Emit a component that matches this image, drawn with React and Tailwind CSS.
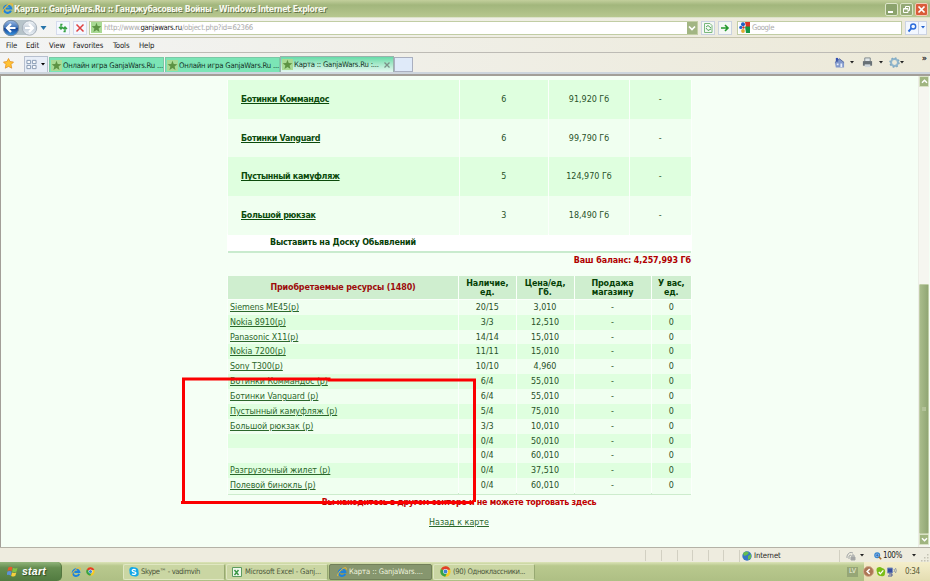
import React from 'react';

const STOCK = [
  { name: 'Ботинки Коммандос', count: '6', price: '91,920 Гб' },
  { name: 'Ботинки Vanguard', count: '6', price: '99,790 Гб' },
  { name: 'Пустынный камуфляж', count: '5', price: '124,970 Гб' },
  { name: 'Большой рюкзак', count: '3', price: '18,490 Гб' },
];

const RESOURCES = [
  { name: 'Siemens ME45(p)', count: '20/15', price: '3,010' },
  { name: 'Nokia 8910(p)', count: '3/3', price: '12,510' },
  { name: 'Panasonic X11(p)', count: '14/14', price: '15,010' },
  { name: 'Nokia 7200(p)', count: '11/11', price: '15,010' },
  { name: 'Sony T300(p)', count: '10/10', price: '4,960' },
  { name: 'Ботинки Коммандос (p)', count: '6/4', price: '55,010' },
  { name: 'Ботинки Vanguard (p)', count: '6/4', price: '55,010' },
  { name: 'Пустынный камуфляж (p)', count: '5/4', price: '75,010' },
  { name: 'Большой рюкзак (p)', count: '3/3', price: '10,010' },
  { name: '', count: '0/4', price: '50,010' },
  { name: '', count: '0/4', price: '60,010' },
  { name: 'Разгрузочный жилет (p)', count: '0/4', price: '37,510' },
  { name: 'Полевой бинокль (p)', count: '0/4', price: '60,010' },
];

function IeIcon({ className }) {
  return (
    <svg viewBox="0 0 12 12" className={className} fill="none">
      <path d="M9.8 8.2A4 4 0 1 1 10 6H4" stroke="#1e82dc" strokeWidth="2.3" />
      <path d="M1 10.8C-.5 8.5 7-.5 11 1.1c.7.4.5 1.2 0 2.2" stroke="#f0bd35" strokeWidth="1.2" />
    </svg>
  );
}

function ChromeIcon({ className }) {
  return (
    <svg viewBox="0 0 12 12" className={className}>
      <circle cx="6" cy="6" r="5.6" fill="#f5c926" />
      <path d="M6 6L1 3.3A5.6 5.6 0 0 1 11.2 4H6z" fill="#df3f2d" />
      <path d="M6 6L1 3.3A5.6 5.6 0 0 0 5.6 11.6L8 7z" fill="#35a349" />
      <circle cx="6" cy="6" r="2.7" fill="#fff" />
      <circle cx="6" cy="6" r="2.1" fill="#3f83d8" />
    </svg>
  );
}

function StarIcon() {
  return (
    <svg viewBox="0 0 11 11" className="h-[11px] w-[11px] shrink-0">
      <path d="M0 0h11v11H0z" fill="#a9da94" />
      <path d="M5.5.8l1.2 3.1 3.6.3-2.7 2.2.9 3.6-3-1.9L2.4 10l1-3.6L.7 4.2l3.5-.3z" fill="#5d9344" />
    </svg>
  );
}

function SkypeIcon({ className }) {
  return (
    <svg viewBox="0 0 11 11" className={className}>
      <path d="M1 1q2-1.5 4-.6 6 .2 5.4 5.2 1 3-1.2 4.4-2 1-3.6.2Q.2 10 .6 5 0 2.5 1 1" fill="#12a8e8" />
      <path d="M7.5 3.5Q5.5 2 3.800 3.200c-1 1.600 1 1.900 2 2.200 2 .4 2.200 1.500 1.300 2.200Q5.200 8.800 3.400 7.300" fill="none" stroke="#fff" strokeWidth="1.4" />
    </svg>
  );
}

function Caret({ className }) {
  return (
    <svg viewBox="0 0 4 3" className={className}>
      <path d="M0 0h4L2 2.6z" fill="currentColor" />
    </svg>
  );
}

function TitleBar() {
  return (
    <div className="flex h-[17px] shrink-0 items-center bg-linear-to-b from-[#c3cf9c] via-[#a2b67c] via-30% to-[#b7c78f] pl-[2px] pr-[2px]">
      <IeIcon className="h-[11px] w-[11px]" />
      <span className="ml-px whitespace-pre font-['DejaVu_Sans_Condensed',sans-serif] text-[8.6px] font-bold leading-[16px] tracking-[-0.39px] text-[#f8faee] [text-shadow:1px_1px_0_#66764a]">
        Карта :: GanjaWars.Ru :: Ганджубасовые Войны - Windows Internet Explorer
      </span>
      <div className="ml-auto flex gap-[2px] pt-px">
        <div className="flex h-[13px] w-[13px] items-end rounded-[2px] border border-[#dce4c8] bg-[#8ca36d] pb-[2px] pl-[2px]">
          <span className="h-[2px] w-[5px] bg-white" />
        </div>
        <div className="h-[13px] w-[13px] rounded-[2px] border border-[#dce4c8] bg-[#94a976]">
          <svg viewBox="0 0 11 11" fill="none" stroke="#fff">
            <path d="M4.500 4V2.500h4v4H7M2.500 4.500h4.500v4H2.500zM2.500 5h4.500" />
          </svg>
        </div>
        <div className="h-[13px] w-[13px] rounded-[2px] border border-[#f4cbb9] bg-[#d95c39]">
          <svg viewBox="0 0 11 11" fill="none" stroke="#fff" strokeWidth="1.7">
            <path d="M2.500 2.500l6 6m0-6l-6 6" />
          </svg>
        </div>
      </div>
    </div>
  );
}

function AddressBar() {
  return (
    <div className="flex h-[21px] shrink-0 items-center border-b border-[#c5c4ad] border-t border-t-[#dce2c9] bg-linear-to-r from-[#f3f4f4] to-[#ece9d8] pl-[3px] pr-[3px]">
      <svg viewBox="0 0 46 18" className="h-[18px] w-[46px]">
        <defs>
          <linearGradient id="back" x2="0" y2="1">
            <stop stopColor="#9dbce6" />
            <stop offset=".48" stopColor="#3c70b7" />
            <stop offset=".5" stopColor="#143d91" />
            <stop offset="1" stopColor="#3b9be5" />
          </linearGradient>
          <linearGradient id="fwd" x2="0" y2="1">
            <stop stopColor="#f4f7fa" />
            <stop offset=".5" stopColor="#c3ced9" />
            <stop offset="1" stopColor="#eef3f8" />
          </linearGradient>
        </defs>
        <path d="M7 1h20a8 8 0 0 1 0 15H8z" fill="#b7c4ca" />
        <circle cx="8" cy="9" r="7.7" fill="url(#back)" stroke="#76899d" />
        <circle cx="26.5" cy="9" r="7.2" fill="url(#fwd)" stroke="#a7b1bb" />
        <path d="M12.500 9H4m4-4L4 9l4 4" stroke="#fff" strokeWidth="2.2" fill="none" />
        <path d="M22 9h8m-4-4l4 4-4 4" stroke="#fff" strokeWidth="2.200" fill="none" />
        <path d="M37.500 7h6l-3 4z" fill="#2674aa" />
      </svg>
      <div className="ml-[7px] flex gap-[3px]">
        <div className="h-[14px] w-[14px] border border-[#d6dced] bg-[#f4f8ff]">
          <svg viewBox="0 0 12 12" fill="none" stroke="#34a142" strokeWidth="1.4">
            <path d="M5.500 2.500H4v4M2 5l2 2 2-2M6.500 9.500H8v-4M6 7l2-2 2 2" />
          </svg>
        </div>
        <div className="h-[14px] w-[14px] border border-[#d6dced] bg-[#f4f8ff]">
          <svg viewBox="0 0 12 12" fill="none" stroke="#df4141" strokeWidth="1.5">
            <path d="M2.500 2.500l7 7m0-7l-7 7" />
          </svg>
        </div>
      </div>
      <div className="ml-[2px] flex h-[14px] w-[609px] items-center border border-[#c1cda4] bg-white pl-px">
        <StarIcon />
        <span className="ml-[2px] whitespace-pre text-[7.7px] leading-[12px] tracking-[-0.29px] text-[#aaa]">
          http://www.<span className="text-[#222]">ganjawars.ru</span>/object.php?id=62366
        </span>
        <div className="ml-auto flex h-[12px] w-[10px] items-center justify-center bg-[#a2b583]">
          <svg viewBox="0 0 8 6" className="h-[6px] w-[8px]" fill="none" stroke="#fff" strokeWidth="1.7">
            <path d="M1 1.500l3 3 3-3" />
          </svg>
        </div>
      </div>
      <div className="ml-[3px] flex gap-[3px]">
        <div className="h-[14px] w-[14px] border border-[#cbd2df] bg-[#f4f8f4]">
          <svg viewBox="0 0 12 12" fill="none" stroke="#79b77c">
            <path d="M2.500 1.500H8l2 2v7H2.500z" />
            <path d="M4 5l2-1.500L9 6M4 6l2 2.500L9 7" stroke="#50a957" />
          </svg>
        </div>
        <div className="h-[14px] w-[14px] border border-[#cbd2df] bg-[#f4f8f4]">
          <svg viewBox="0 0 12 12" fill="none" stroke="#24992d" strokeWidth="1.6">
            <path d="M2 6h7M6 3l3 3-3 3" />
          </svg>
        </div>
      </div>
      <div className="ml-[5px] flex h-[14px] w-[165px] items-center border border-[#c1cda4] bg-white pl-px">
        <svg viewBox="0 0 11 11" className="h-[11px] w-[11px]">
          <path d="M0 0h7v11H0z" fill="#f6f8ff" />
          <path d="M6 0h5v5H7z" fill="#d93426" />
          <path d="M6 4.500h5V11H7z" fill="#149644" />
          <circle cx="4" cy="2.300" r="2" fill="#205fc5" />
          <circle cx="1.800" cy="5.400" r="1.600" fill="#2366ca" />
          <circle cx="4.500" cy="5.500" r="1.200" fill="#cf3b30" />
          <circle cx="4" cy="9" r="1.900" fill="#e2ad30" />
        </svg>
        <span className="ml-[2px] text-[7.7px] tracking-[-0.4px] text-[#aaa]">Google</span>
      </div>
      <div className="ml-[3px] flex h-[14px] w-[22px] items-center border border-[#ccd3e2] bg-[#f2f7ff]">
        <svg viewBox="0 0 12 12" className="h-[12px] w-[13px] border-r border-[#ccd3e2]" fill="none" stroke="#2b6bdb">
          <circle cx="7.200" cy="4.500" r="2.500" strokeWidth="1.400" />
          <path d="M5.300 6.400L2.500 9.500" strokeWidth="1.900" />
        </svg>
        <Caret className="ml-[2px] h-[3px] w-[4px] text-[#2563cd]" />
      </div>
    </div>
  );
}

function MenuBar() {
  return (
    <div className="flex h-[15px] shrink-0 items-center border-b border-[#bdbbb5] bg-linear-to-r from-[#f3f4f4] to-[#ece9d8] pl-[6px] pt-[2px] text-[7.7px] tracking-[-0.1px]">
      <span className="w-[20px]">File</span>
      <span className="w-[23px]">Edit</span>
      <span className="w-[24px]">View</span>
      <span className="w-[40px]">Favorites</span>
      <span className="w-[26px]">Tools</span>
      <span>Help</span>
    </div>
  );
}

function TabBar() {
  return (
    <div className="flex h-[21px] shrink-0 items-end border-b-2 border-[#cdd5dd] bg-linear-to-r from-[#f3f4f4] to-[#ece9d8] pr-[3px]">
      <svg viewBox="0 0 12 12" className="mb-[3px] ml-[3px] h-[11px] w-[11px]">
        <path d="M6 .5l1.700 3.400 3.800.5-2.700 2.700.7 4L6 9.200l-3.500 1.900.7-4L.5 4.400l3.800-.5z" fill="#ffc334" stroke="#e28c1d" strokeWidth=".8" />
      </svg>
      <div className="ml-[10px] flex h-[16px] w-[24px] items-center border border-b-0 border-[#b7c0cf] bg-[#e8eef8]">
        <svg viewBox="0 0 12 12" className="ml-px h-[11px] w-[11px]" fill="#f7f9fb" stroke="#8296b0">
          <path d="M1 1.500h4v3.500H1zM7 1.500h4v3.500H7zM1 7h4v3.500H1zM7 7h4v3.500H7z" />
        </svg>
        <Caret className="ml-[4px] h-[3px] w-[4px] text-black" />
      </div>
      <div className="flex items-end text-[7.7px] leading-[14px] tracking-[-0.21px] text-[#143326]">
        <div className="ml-px flex h-[15px] w-[115px] items-center gap-px whitespace-pre border border-b-0 border-[#7ac9a5] bg-[#7be5b6] pl-px pt-px">
          <StarIcon />
          Онлайн игра GanjaWars.Ru ...
        </div>
        <div className="ml-px flex h-[15px] w-[115px] items-center gap-px whitespace-pre border border-b-0 border-[#7ac9a5] bg-[#7be5b6] pl-px pt-px">
          <StarIcon />
          Онлайн игра GanjaWars.Ru ...
        </div>
        <div className="flex h-[16px] w-[114px] items-center gap-px whitespace-pre border border-b-0 border-[#9ab2ac] bg-linear-to-b from-[#65dba8] to-[#e4f8f1] pl-px">
          <StarIcon />
          Карта :: GanjaWars.Ru :...
          <svg viewBox="0 0 6 6" className="ml-auto mr-[3px] h-[6px] w-[6px]" fill="none" stroke="#7b9188" strokeWidth="1.300">
            <path d="M.5.500l5 5m0-5l-5 5" />
          </svg>
        </div>
        <div className="h-[15px] w-[19px] border border-[#a9afbf] bg-[#dfeaf9]" />
      </div>
      <div className="mb-[3px] ml-auto flex items-center">
        <svg viewBox="0 0 12 12" className="h-[11px] w-[11px]">
          <path d="M1 6l5-4 5 4v5.500H2z" fill="#8198cb" />
          <path d="M2 1h2.500v4H2z" fill="#3450b3" />
          <path d="M1 6l5-4 5 4" fill="none" stroke="#53679c" />
          <path d="M3 7h2v2H3zM7 7h2v4H7z" fill="#e9f0fc" />
        </svg>
        <Caret className="ml-[5px] h-[3px] w-[4px]" />
        <svg viewBox="0 0 12 12" className="ml-[8px] h-[11px] w-[11px]">
          <path d="M3 1h6v4H3z" fill="#dfe5e8" stroke="#7d8588" />
          <path d="M1 4.500h10v5H1z" fill="#687176" />
          <path d="M3 8h6v3H3z" fill="#d1d8dc" />
        </svg>
        <Caret className="ml-[6px] h-[3px] w-[4px]" />
        <svg viewBox="0 0 12 12" className="ml-[6px] h-[11px] w-[11px]" fill="none">
          <circle cx="6" cy="6" r="3.800" stroke="#8fb5cc" strokeWidth="2.200" />
          <circle cx="6" cy="6" r="5" stroke="#7fa8c0" strokeWidth="1.500" strokeDasharray="1.800 2.100" />
        </svg>
        <Caret className="h-[3px] w-[4px]" />
        <span className="mb-[9px] ml-[18px] text-[9px] font-bold leading-[4px]">»</span>
      </div>
    </div>
  );
}

function ShopPage() {
  return (
    <div className="min-w-0 flex-1 overflow-hidden bg-[#f5fff5] pl-[226px] pt-[4px] font-['DejaVu_Sans',sans-serif] text-[8px] leading-[10px] text-[#285128]">
      <div className="w-[465px] bg-[#fbfffb] px-px">
        {STOCK.map((item, i) => (
          <div
            key={item.name}
            className={`mb-px grid h-[37.7px] grid-cols-[230.5px_88.5px_80px_60.5px] gap-px text-center leading-[39px] ${i % 2 ? '*:bg-[#f0fff0]' : '*:bg-[#dfffdf]'}`}
          >
            <div className="pl-[13px] text-left">
              <a className="font-bold tracking-[-0.34px] text-[#0b4b0b] underline">{item.name}</a>
            </div>
            <div>{item.count}</div>
            <div>{item.price}</div>
            <div>-</div>
          </div>
        ))}
        <div className="-mx-px -mt-px h-[17.5px] bg-white pl-[43px] font-bold leading-[18px] tracking-[-0.19px] text-[#064006]">
          Выставить на Доску Обьявлений
        </div>
        <div className="h-[2px] bg-[#c9ebce]" />
      </div>
      <div className="h-[22.7px] w-[464px] pt-[3px] text-right font-bold leading-[10px] tracking-[-0.11px] text-[#b00000]">
        Ваш баланс: 4,257,993 Гб
      </div>
      <div className="w-[465px] bg-[#fbfffb] px-px">
        <div className="mb-px grid h-[23px] grid-cols-[230px_56.5px_57px_76px_39.5px] gap-px text-center font-bold leading-[9px] tracking-[-0.13px] text-[#064006] *:flex *:items-center *:justify-center *:bg-[#cfeecf] *:pt-px">
          <div className="text-[#9d0b0b]">Приобретаемые ресурсы (1480)</div>
          <div>Наличие,<br />ед.</div>
          <div>Цена/ед,<br />Гб.</div>
          <div>Продажа<br />магазину</div>
          <div>У вас,<br />ед.</div>
        </div>
        {RESOURCES.map((item, i) => (
          <div
            key={i}
            className={`mb-px grid h-[13.85px] grid-cols-[230px_56.5px_57px_76px_39.5px] gap-px text-center leading-[15.5px] ${i % 2 ? '*:bg-[#dfffdf]' : '*:bg-[#f0fff0]'}`}
          >
            <div className="pl-[2px] text-left">
              <a className="tracking-[-0.08px] text-[#2b672b] underline">{item.name}</a>
            </div>
            <div>{item.count}</div>
            <div>{item.price}</div>
            <div>-</div>
            <div>0</div>
          </div>
        ))}
        <div className="mt-px h-[2px] bg-[#cdeccd]" />
      </div>
      <div className="w-[464px] pt-[3px] text-center font-bold tracking-[-0.29px] text-[#c00000]">
        Вы находитесь в другом секторе и не можете торговать здесь
      </div>
      <div className="w-[464px] pt-[10px] text-center">
        <a className="text-[#2b672b] underline">Назад к карте</a>
      </div>
    </div>
  );
}

function ScrollBar() {
  return (
    <div className="flex w-[11px] shrink-0 flex-col border-l border-[#eceee6] bg-[#f6f6f0]">
      <div className="flex h-[11px] items-center justify-center rounded-[1px] border border-[#d9e2c5] bg-[#a0b580]">
        <svg viewBox="0 0 8 6" className="h-[5px] w-[7px]" fill="none" stroke="#fff" strokeWidth="1.8">
          <path d="M1 4.500l3-3 3 3" />
        </svg>
      </div>
      <div className="mt-auto flex h-[250px] items-center justify-center rounded-[1px] border border-[#c0cda7] bg-linear-to-r from-[#a9bc8b] to-[#91a674]">
        <div className="h-[4px] w-[4px] bg-[#b3c299]" />
      </div>
      <div className="mb-[2px] flex h-[11px] items-center justify-center rounded-[1px] border border-[#d9e2c5] bg-[#a0b580]">
        <svg viewBox="0 0 8 6" className="h-[5px] w-[7px]" fill="none" stroke="#fff" strokeWidth="1.8">
          <path d="M1 1.500l3 3 3-3" />
        </svg>
      </div>
    </div>
  );
}

function StatusBar() {
  return (
    <div className="flex h-[15px] shrink-0 items-center justify-end border-t border-[#b4b2a6] bg-[#eeecdf] pt-px text-[7.7px]">
      <div className="flex h-[11px]">
        {[0, 1, 2, 3, 4, 5].map((n) => (
          <div key={n} className="w-[15.6px] border-l border-[#d2d0c2]" />
        ))}
      </div>
      <div className="flex h-[12px] w-[100px] items-center border-l border-[#d2d0c2] pl-[2px]">
        <svg viewBox="0 0 10 10" className="h-[10px] w-[10px]">
          <circle cx="5" cy="5" r="4.700" fill="#3576c6" />
          <path d="M1 2q4-3 6 0L5 4 2 5zM6 5l3-2v4L6 9z" fill="#64bd50" />
        </svg>
        <span className="ml-[2px] tracking-[-0.1px]">Internet</span>
      </div>
      <div className="flex h-[12px] w-[31px] items-center border-l border-[#d2d0c2] pl-[6px]">
        <svg viewBox="0 0 10 10" className="h-[10px] w-[10px]" fill="none" stroke="#a3a7a7">
          <path d="M1 7V5q2-5 6-3M3 8V5l2-1" />
          <path d="M5 6h4v3H5z" fill="#a5a5a5" />
          <path d="M6 6V4h2v2" />
        </svg>
        <Caret className="ml-[4px] h-[3px] w-[4px]" />
      </div>
      <svg viewBox="0 0 10 10" className="ml-[4px] h-[8px] w-[8px]" fill="none" stroke="#3688d1">
        <circle cx="4" cy="4" r="3" strokeWidth="1.500" fill="#b5dfff" />
        <path d="M4 2v4M2 4h4" stroke="#1d52a8" />
        <path d="M6 6l3 3" stroke="#a66b2b" strokeWidth="2" />
      </svg>
      <span className="ml-px w-[29px] text-[8px] tracking-[-0.4px]">100%</span>
      <Caret className="mr-[5px] h-[3px] w-[4px]" />
      <svg viewBox="0 0 8 8" className="mr-px mt-[5px] h-[8px] w-[8px]" fill="#c4c2b4">
        <path d="M6 0h1.500v1.500H6zM6 3h1.500v1.500H6zM3 3h1.500v1.500H3zM6 6h1.500v1.500H6zM3 6h1.500v1.500H3zM0 6h1.500v1.500H0z" />
      </svg>
    </div>
  );
}

function TaskBar() {
  return (
    <div className="flex h-[19px] shrink-0 items-center bg-linear-to-b from-[#dce4b8] via-[#b9c98e] via-20% to-[#aebf84] text-[7.6px] text-[#4c563b]">
      <div className="flex h-[19px] w-[62px] items-center rounded-r-[5px] border-r border-[#55763f] bg-linear-to-b from-[#91b57b] via-[#668e51] via-30% to-[#527b40] pl-[7px]">
        <svg viewBox="0 0 12 12" className="h-[11px] w-[11px]">
          <path d="M1.500 1.500Q4 0 6 1.500L5 5.500Q3 4 .5 5.500z" fill="#e75b2b" />
          <path d="M6.500 2Q9 3.500 11.500 2l-1 4Q8 7.500 5.500 6z" fill="#83c345" />
          <path d="M.5 6Q3 5 5 6.300L4 10.500Q2 9-.5 10z" fill="#5c92d8" />
          <path d="M5.500 7Q8 8 10.200 7L9 11Q7 12 4.500 10.800z" fill="#f5cf3e" />
        </svg>
        <span className="ml-[4px] font-['Liberation_Sans',sans-serif] text-[10.5px] font-bold italic tracking-[0.25px] text-white [text-shadow:1px_1px_1px_#304c25]">start</span>
      </div>
      <IeIcon className="ml-[9px] h-[10px] w-[10px]" />
      <ChromeIcon className="ml-[5px] h-[9px] w-[9px]" />
      <div className="ml-[28px] flex h-[16px] w-[102px] items-center rounded-[2px] border border-[#e0e7c2] border-r-[#97a972] bg-[#cad6a3] pl-[5px]">
        <SkypeIcon className="h-[10px] w-[10px]" />
        <span className="ml-[2px] tracking-[-0.4px]">Skype™ - vadimvih</span>
      </div>
      <div className="ml-px flex h-[16px] w-[102px] items-center whitespace-pre rounded-[2px] border border-[#e0e7c2] border-r-[#97a972] bg-[#cad6a3] pl-[5px]">
        <svg viewBox="0 0 10 10" className="h-[10px] w-[10px]">
          <path d="M.5.500h9v9h-9z" fill="#eef7ed" stroke="#5e9c60" />
          <path d="M2.500 3l4 5m0-5l-4 5" stroke="#3d9847" strokeWidth="1.500" />
        </svg>
        <span className="ml-[3px] tracking-[-0.17px]">Microsoft Excel - Ganj...</span>
      </div>
      <div className="ml-px flex h-[16px] w-[103px] items-center whitespace-pre rounded-[2px] border border-[#72805a] bg-[#86966e] pl-[7px] text-[#eff4df]">
        <IeIcon className="h-[10px] w-[10px]" />
        <span className="ml-[2px] tracking-[-0.09px]">Карта :: GanjaWars....</span>
      </div>
      <div className="ml-px flex h-[16px] w-[102px] items-center whitespace-pre rounded-[2px] border border-[#e0e7c2] border-r-[#97a972] bg-[#cad6a3] pl-[6px]">
        <ChromeIcon className="h-[11px] w-[11px]" />
        <span className="ml-[2px] tracking-[-0.33px]">(90) Одноклассники...</span>
      </div>
      <div className="ml-auto mr-[6px] flex h-[10px] w-[11px] items-center justify-center bg-[#96a676] text-[7px] text-[#eef2df]">LV</div>
      <div className="flex h-[19px] w-[66px] items-center bg-linear-to-b from-[#f4eecb] to-[#e4ddb1]">
        <svg viewBox="0 0 11 11" className="-ml-px h-[11px] w-[11px]">
          <circle cx="5.500" cy="5.500" r="5" fill="#ac7654" stroke="#d4ab8e" />
          <path d="M6.700 3l-2.500 2.500L6.700 8" fill="none" stroke="#fff" strokeWidth="1.600" />
        </svg>
        <svg viewBox="0 0 10 10" className="ml-[2px] h-[10px] w-[10px]">
          <path d="M1 1q3-2 5 0 4 1 3 5 0 4-4 3-4 0-4-4-1-2 0-4" fill="#79bd16" />
          <path d="M2.800 5l1.500 1.800L7.300 3.300" stroke="#fff" strokeWidth="1.300" fill="none" />
        </svg>
        <svg viewBox="0 0 10 10" className="ml-px h-[10px] w-[10px]" fill="none">
          <path d="M.5 1h5v5h-5z" fill="#354d9f" stroke="#7b8fb8" />
          <path d="M2 7h3v2H1" stroke="#4e5b91" />
          <path d="M7 2q1 1.500 0 3M8.500 1q1.500 2.500 0 5" stroke="#8c97a5" />
        </svg>
        <span className="ml-[8px] text-[8px] tracking-[-0.4px] text-[#5b5b36]">0:34</span>
      </div>
    </div>
  );
}

export default function App() {
  return (
    <div className="relative flex h-[581px] w-[930px] flex-col overflow-hidden bg-[#f5fff5] font-['DejaVu_Sans_Condensed',sans-serif] text-[#222]">
      <TitleBar />
      <AddressBar />
      <MenuBar />
      <TabBar />
      <div className="flex h-[473px] shrink-0 border-l border-t-2 border-[#a39f98] pr-px">
        <ShopPage />
        <ScrollBar />
      </div>
      <StatusBar />
      <TaskBar />
      {/* hand-drawn marker box over the table */}
      <svg viewBox="0 0 296 128" className="absolute left-[181px] top-[377px] h-[128px] w-[296px]" fill="none" stroke="#fb0000" strokeWidth="3">
        <path d="M1 2h147v1h145.500v122M2.500 1v124M0 125.500h293" />
      </svg>
    </div>
  );
}
